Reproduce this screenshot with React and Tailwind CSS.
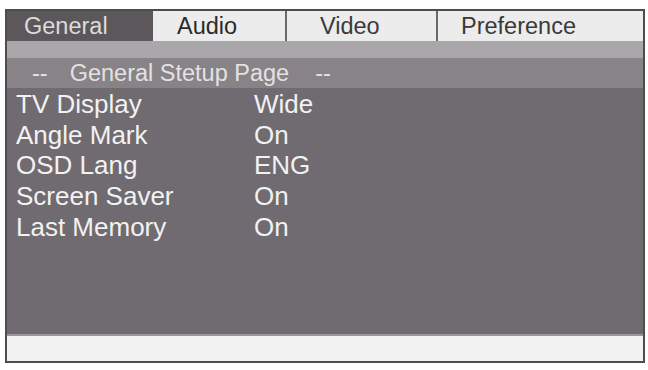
export default function App() {
  const rows = [
    ["TV Display", "Wide"],
    ["Angle Mark", "On"],
    ["OSD Lang", "ENG"],
    ["Screen Saver", "On"],
    ["Last Memory", "On"],
  ];
  return (
    <div className="w-[648px] h-[370px] bg-white pt-[9px] pl-[5px]" style={{ fontFamily: '"Liberation Sans", Arial, sans-serif' }}>
      <div className="w-[640px] h-[354px] border-2 border-[#4e4c4e] flex flex-col bg-[#706b70]">
        <div className="flex h-[30px] bg-[#ececec] text-[23.5px] leading-[30px]">
          <div className="w-[146px] bg-[#5b575a] text-[#dcdcdc] pl-[17px]">General</div>
          <div className="w-[134px] text-[#2a2a2a] pl-[24px] border-r-2 border-[#6a686a]">Audio</div>
          <div className="w-[151px] text-[#3a3a3a] pl-[33px] border-r-2 border-[#6a686a]">Video</div>
          <div className="flex-1 text-[#3a3a3a] pl-[23px]">Preference</div>
        </div>
        <div className="h-[17px] bg-[#a9a7a9]" />
        <div className="h-[30px] bg-[#878387] text-[#e2e2e2] text-[23.5px] leading-[30px] pl-[25px] flex">
          <span>--</span>
          <span className="ml-[22px]">General Stetup Page</span>
          <span className="ml-[26px]">--</span>
        </div>
        <div className="flex-1 flex flex-col pl-[9px] pt-[1px] text-[#f2f2f2] text-[26px] leading-[30.7px]">
          {rows.map(([k, v]) => (
            <div key={k} className="flex">
              <span className="w-[238px]">{k}</span>
              <span>{v}</span>
            </div>
          ))}
        </div>
        <div className="h-[27px] bg-[#f2f2f2] border-t-2 border-[#9a989a]" />
      </div>
    </div>
  );
}
